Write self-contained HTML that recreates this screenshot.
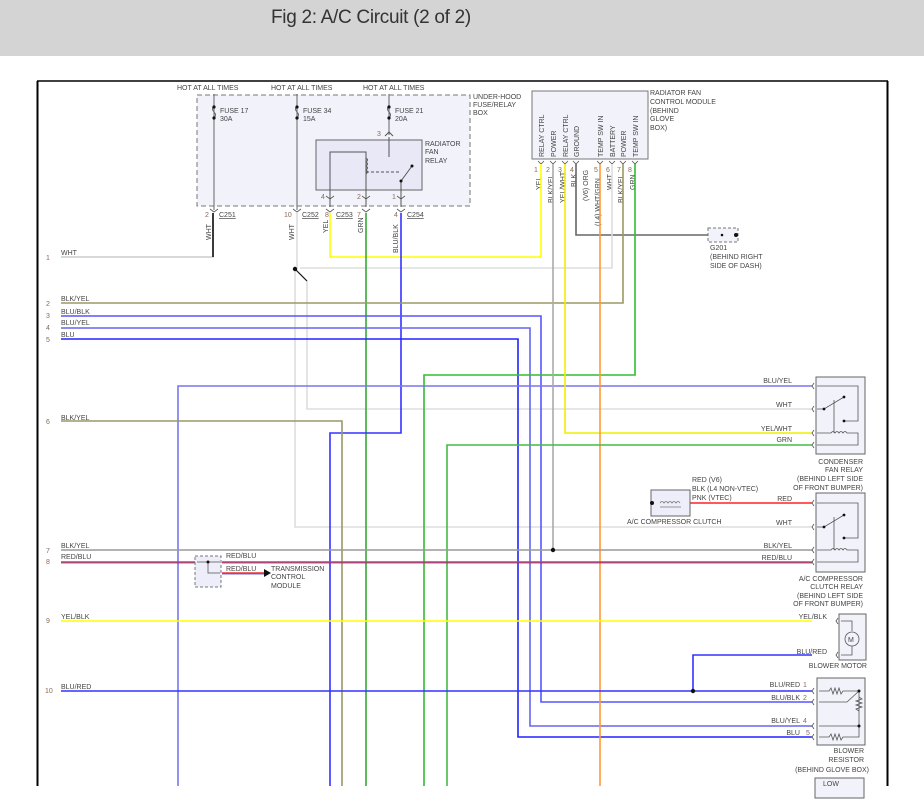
<!DOCTYPE html>
<html><head><meta charset="utf-8"><style>
html,body{margin:0;padding:0;background:#fff;width:924px;height:808px;overflow:hidden}
.hdr{position:absolute;left:0;top:0;width:924px;height:56px;background:#d4d4d4}
.hdr span{position:absolute;left:271px;top:7px;font:19px "Liberation Sans",sans-serif;color:#333;letter-spacing:-0.3px}
svg{position:absolute;left:0;top:0}
text{font-family:"Liberation Sans",sans-serif;font-size:7px;fill:#444}
.n{fill:#8a6a5a}
</style></head><body>
<div class="hdr"><span>Fig 2: A/C Circuit (2 of 2)</span></div>
<svg width="924" height="808" viewBox="0 0 924 808">
<!-- frame -->
<line x1="37.5" y1="81" x2="37.5" y2="786" stroke="#000" stroke-width="2"/>
<line x1="37" y1="81" x2="888" y2="81" stroke="#000" stroke-width="1.5"/>
<line x1="887.5" y1="81" x2="887.5" y2="786" stroke="#000" stroke-width="2"/>

<!-- fuse/relay box -->
<rect x="197" y="95" width="273" height="111" fill="#f2f2fb" stroke="#777" stroke-dasharray="5,3"/>
<text x="177" y="90">HOT AT ALL TIMES</text>
<text x="271" y="90">HOT AT ALL TIMES</text>
<text x="363" y="90">HOT AT ALL TIMES</text>
<text x="473" y="99">UNDER-HOOD</text>
<text x="473" y="107">FUSE/RELAY</text>
<text x="473" y="115">BOX</text>
<g stroke="#666" fill="none">
<line x1="214" y1="94" x2="214" y2="210"/>
<line x1="297" y1="94" x2="297" y2="210"/>
<line x1="389" y1="94" x2="389" y2="135"/>
<path d="M214 106 q-3 3 0 6 q3 3 0 6"/><path d="M297 106 q-3 3 0 6 q3 3 0 6"/><path d="M389 106 q-3 3 0 6 q3 3 0 6"/>
</g>
<g fill="#111"><circle cx="214" cy="107" r="1.6"/><circle cx="214" cy="118" r="1.6"/><circle cx="297" cy="107" r="1.6"/><circle cx="297" cy="118" r="1.6"/><circle cx="389" cy="107" r="1.6"/><circle cx="389" cy="118" r="1.6"/></g>
<text x="220" y="113">FUSE 17</text><text x="220" y="121">30A</text>
<text x="303" y="113">FUSE 34</text><text x="303" y="121">15A</text>
<text x="395" y="113">FUSE 21</text><text x="395" y="121">20A</text>
<text x="377" y="136" class="n">3</text>
<rect x="316" y="140" width="106" height="50" fill="#e8e8f6" stroke="#666"/>
<text x="425" y="146">RADIATOR</text><text x="425" y="154">FAN</text><text x="425" y="163">RELAY</text>
<g stroke="#555" fill="none">
<path d="M330 207 V152 H366 V207"/>
<path d="M366 158 q3 2 0 4 q3 2 0 4 q3 2 0 4 q3 2 0 4"/>
<path d="M366 172 H401" stroke-dasharray="3,2"/>
<path d="M389 137 V157"/>
<path d="M401 207 V181 L412 166"/>
<path d="M385 136 l4 -4 l4 4"/>
</g>
<circle cx="412" cy="166" r="1.5" fill="#111"/><circle cx="401" cy="181" r="1.5" fill="#111"/>
<g stroke="#555" fill="none" stroke-width="0.8">
<path d="M210 209 l4 3 l4 -3"/><path d="M293 209 l4 3 l4 -3"/><path d="M326 209 l4 3 l4 -3"/><path d="M362 209 l4 3 l4 -3"/><path d="M397 209 l4 3 l4 -3"/>
<path d="M326 196 l4 3 l4 -3"/><path d="M362 196 l4 3 l4 -3"/><path d="M397 196 l4 3 l4 -3"/>
</g>
<text x="321" y="199" class="n">4</text><text x="357" y="199" class="n">2</text><text x="392" y="199" class="n">1</text>
<text x="205" y="217" class="n">2</text><text x="219" y="217" text-decoration="underline">C251</text>
<text x="284" y="217" class="n">10</text><text x="302" y="217" text-decoration="underline">C252</text>
<text x="325" y="217" class="n">8</text><text x="336" y="217" text-decoration="underline">C253</text>
<text x="357" y="217" class="n">7</text>
<text x="394" y="217" class="n">4</text><text x="407" y="217" text-decoration="underline">C254</text>
<g transform="rotate(-90)">
<text x="-240" y="211">WHT</text><text x="-240" y="294">WHT</text><text x="-233" y="328">YEL</text><text x="-233" y="363">GRN</text><text x="-253" y="398">BLU/BLK</text>
</g>

<!-- module -->
<rect x="532" y="91" width="116" height="68" fill="#f2f2fb" stroke="#777"/>
<text x="650" y="95">RADIATOR FAN</text><text x="650" y="104">CONTROL MODULE</text><text x="650" y="113">(BEHIND</text><text x="650" y="121">GLOVE</text><text x="650" y="130">BOX)</text>
<g transform="rotate(-90)">
<text x="-157" y="544">RELAY CTRL</text><text x="-157" y="556">POWER</text><text x="-157" y="568">RELAY CTRL</text><text x="-157" y="579">GROUND</text>
<text x="-157" y="603">TEMP SW IN</text><text x="-157" y="615">BATTERY</text><text x="-157" y="626">POWER</text><text x="-157" y="638">TEMP SW IN</text>
<text x="-190" y="541">YEL</text><text x="-203" y="553">BLK/YEL</text><text x="-203" y="565">YEL/WHT</text><text x="-187" y="576">BLK</text>
<text x="-201" y="588">(V6) ORG</text><text x="-226" y="600">(L4)  WHT/GRN</text><text x="-190" y="612">WHT</text><text x="-203" y="623">BLK/YEL</text><text x="-190" y="635">GRN</text>
</g>
<g class="n"><text x="534" y="172" class="n">1</text><text x="546" y="172" class="n">2</text><text x="558" y="172" class="n">3</text><text x="570" y="172" class="n">4</text><text x="594" y="172" class="n">5</text><text x="606" y="172" class="n">6</text><text x="617" y="172" class="n">7</text><text x="628" y="172" class="n">8</text></g>
<g stroke="#555" fill="none" stroke-width="0.8">
<path d="M538 161 l3 3 l3 -3"/><path d="M550 161 l3 3 l3 -3"/><path d="M562 161 l3 3 l3 -3"/><path d="M573 161 l3 3 l3 -3"/><path d="M597 161 l3 3 l3 -3"/><path d="M609 161 l3 3 l3 -3"/><path d="M620 161 l3 3 l3 -3"/><path d="M632 161 l3 3 l3 -3"/>
</g>
<!-- G201 -->
<rect x="708" y="228" width="30" height="14" fill="#f2f2fb" stroke="#777" stroke-dasharray="3,2"/>
<circle cx="722" cy="235" r="1.3" fill="#111"/><circle cx="736" cy="235" r="2" fill="#111"/>
<text x="710" y="250">G201</text><text x="710" y="259">(BEHIND RIGHT</text><text x="710" y="268">SIDE OF DASH)</text>

<!-- wires -->
<g fill="none" stroke-width="1.6">
<path d="M576 164 V235 H708" stroke="#666"/>
<path d="M61 257 H213 V213" stroke="#ccc"/>
<path d="M213 213 V257" stroke="#111"/>
<path d="M297 213 V269" stroke="#ddd"/>
<path d="M295 269 V527 H812" stroke="#ddd"/>
<path d="M307 281 V409 H812" stroke="#ddd"/>
<path d="M300 268 H612 V164" stroke="#ddd"/>
<path d="M330 213 V257 H541 V164" stroke="#ff0"/>
<path d="M366 213 V786" stroke="#3a3"/>
<path d="M401 213 V433 H330 V786" stroke="#33f"/>
<path d="M61 303 H623 V164" stroke="#999966"/>
<path d="M61 316 H541 V702 H812" stroke="#55f"/>
<path d="M61 328 H530 V726 H812" stroke="#66e"/>
<path d="M61 339 H518 V737 H812" stroke="#22f"/>
<path d="M424 786 V375 H635 V164" stroke="#3b3"/>
<path d="M178 786 V386 H812" stroke="#77e"/>
<path d="M553 164 V549" stroke="#aaa"/>
<path d="M565 164 V433 H812" stroke="#ee0"/>
<path d="M600 164 V786" stroke="#f93"/>
<path d="M447 786 V445 H812" stroke="#4b4"/>
<path d="M61 421 H342 V786" stroke="#996"/>
<path d="M61 550 H812" stroke="#999"/>
<path d="M61 562 H197" stroke="#e33"/><path d="M222 562 H812" stroke="#e33"/>
<path d="M222 573 H268" stroke="#e33"/>
<path d="M690 503 H812" stroke="#f22"/>
<path d="M61 621 H812" stroke="#ff0"/>
<path d="M61 691 H812" stroke="#33f"/>
<path d="M693 691 V655 H812" stroke="#33f"/>
</g>
<path d="M61 563 H197 M222 563 H812 M222 574 H268" stroke="#44c" stroke-width="0.8" fill="none"/>
<line x1="295" y1="269" x2="307" y2="281" stroke="#111" stroke-width="1.2"/>
<circle cx="295" cy="269" r="2.2" fill="#111"/>
<circle cx="553" cy="550" r="2.2" fill="#111"/>
<circle cx="693" cy="691" r="2.2" fill="#111"/>

<!-- left labels -->
<g>
<text x="61" y="255">WHT</text><text x="46" y="260" class="n">1</text>
<text x="61" y="301">BLK/YEL</text><text x="46" y="306" class="n">2</text>
<text x="61" y="314">BLU/BLK</text><text x="46" y="318" class="n">3</text>
<text x="61" y="325">BLU/YEL</text><text x="46" y="330" class="n">4</text>
<text x="61" y="337">BLU</text><text x="46" y="342" class="n">5</text>
<text x="61" y="420">BLK/YEL</text><text x="46" y="424" class="n">6</text>
<text x="61" y="548">BLK/YEL</text><text x="46" y="553" class="n">7</text>
<text x="61" y="559">RED/BLU</text><text x="46" y="564" class="n">8</text>
<text x="61" y="619">YEL/BLK</text><text x="46" y="623" class="n">9</text>
<text x="61" y="689">BLU/RED</text><text x="45" y="693" class="n">10</text>
</g>
<!-- splice -->
<rect x="195" y="556" width="26" height="31" fill="#eeeefa" stroke="#777" stroke-dasharray="3,2"/>
<path d="M197 562 H220 M208 562 V573 H220" stroke="#777" fill="none"/>
<circle cx="208" cy="562" r="1.5" fill="#111"/>
<text x="226" y="558">RED/BLU</text><text x="226" y="571">RED/BLU</text>
<path d="M264 569 l7 4 l-7 4z" fill="#111"/>
<text x="271" y="571">TRANSMISSION</text><text x="271" y="579">CONTROL</text><text x="271" y="588">MODULE</text>

<!-- right components -->
<g text-anchor="end">
<text x="792" y="383">BLU/YEL</text><text x="792" y="407">WHT</text><text x="792" y="431">YEL/WHT</text><text x="792" y="442">GRN</text>
<text x="792" y="501">RED</text><text x="792" y="525">WHT</text><text x="792" y="548">BLK/YEL</text><text x="792" y="560">RED/BLU</text>
<text x="827" y="619">YEL/BLK</text><text x="827" y="654">BLU/RED</text>
<text x="800" y="687">BLU/RED</text><text x="800" y="700">BLU/BLK</text><text x="800" y="723">BLU/YEL</text><text x="800" y="735">BLU</text>
<text x="863" y="464">CONDENSER</text><text x="863" y="472">FAN RELAY</text><text x="863" y="481">(BEHIND LEFT SIDE</text><text x="863" y="490">OF FRONT BUMPER)</text>
<text x="863" y="581">A/C COMPRESSOR</text><text x="863" y="589">CLUTCH RELAY</text><text x="863" y="598">(BEHIND LEFT SIDE</text><text x="863" y="606">OF FRONT BUMPER)</text>
<text x="867" y="668">BLOWER MOTOR</text>
<text x="864" y="753">BLOWER</text><text x="864" y="762">RESISTOR</text><text x="869" y="772">(BEHIND GLOVE BOX)</text>
</g>
<text x="803" y="687" class="n">1</text><text x="803" y="700" class="n">2</text><text x="803" y="723" class="n">4</text><text x="806" y="735" class="n">5</text>
<text x="692" y="482">RED  (V6)</text><text x="692" y="491">BLK  (L4 NON-VTEC)</text><text x="692" y="500">PNK  (VTEC)</text>
<text x="627" y="524">A/C COMPRESSOR CLUTCH</text>
<rect x="651" y="490" width="39" height="26" fill="#eeeefa" stroke="#666"/>
<circle cx="652" cy="503" r="2" fill="#111"/>
<path d="M660 503 q2 -3 4 0 q2 -3 4 0 q2 -3 4 0 q2 -3 4 0 q2 -3 4 0 M660 507 H681" stroke="#777" fill="none" stroke-width="0.8"/>

<rect x="816" y="377" width="49" height="77" fill="#f2f2fb" stroke="#666"/>
<rect x="816" y="493" width="49" height="79" fill="#f2f2fb" stroke="#666"/>
<rect x="839" y="614" width="27" height="46" fill="#f2f2fb" stroke="#666"/>
<rect x="817" y="678" width="48" height="67" fill="#f2f2fb" stroke="#666"/>
<rect x="815" y="778" width="49" height="20" fill="#f2f2fb" stroke="#666"/>
<text x="823" y="786">LOW</text>
<g stroke="#555" fill="none" stroke-width="0.8">
<path d="M817 386 H858 V421 H844 M817 409 H824 L844 397 M817 433 H831 q2 -3 4 0 q2 -3 4 0 q2 -3 4 0 q2 -3 4 0 H858 V445 H817 M834 400 V433" />
<path d="M817 503 H858 V538 H844 M817 527 H824 L844 515 M817 550 H831 q2 -3 4 0 q2 -3 4 0 q2 -3 4 0 q2 -3 4 0 H858 V562 H817 M834 517 V550"/>
<path d="M841 621 H852 V631 M852 646 V655 H841"/>
<circle cx="852" cy="639" r="7"/>
<path d="M819 691 H829 l2 -3 l2 6 l2 -6 l2 6 l2 -6 l2 6 l2 -3 H859 V726 M819 702 H847 L859 691 M859 697 l3 2 l-6 2 l6 2 l-6 2 l6 2 l-6 2 l3 2 M819 726 H859 M819 737 H829 l2 -3 l2 6 l2 -6 l2 6 l2 -6 l2 6 l2 -3 H859 V726"/>
</g>
<text x="848" y="642" font-size="9">M</text>
<g fill="#111"><circle cx="824" cy="409" r="1.4"/><circle cx="844" cy="397" r="1.4"/><circle cx="844" cy="421" r="1.4"/><circle cx="824" cy="527" r="1.4"/><circle cx="844" cy="515" r="1.4"/><circle cx="844" cy="538" r="1.4"/><circle cx="859" cy="691" r="1.5"/><circle cx="859" cy="726" r="1.5"/></g>
<g stroke="#555" fill="none" stroke-width="0.8">
<path d="M814 383 l-2 3 l2 3 M814 406 l-2 3 l2 3 M814 430 l-2 3 l2 3 M814 442 l-2 3 l2 3 M814 500 l-2 3 l2 3 M814 524 l-2 3 l2 3 M814 547 l-2 3 l2 3 M814 559 l-2 3 l2 3 M838 618 l-2 3 l2 3 M838 652 l-2 3 l2 3 M814 688 l-2 3 l2 3 M814 699 l-2 3 l2 3 M814 723 l-2 3 l2 3 M814 734 l-2 3 l2 3"/>
</g>
</svg>
</body></html>
